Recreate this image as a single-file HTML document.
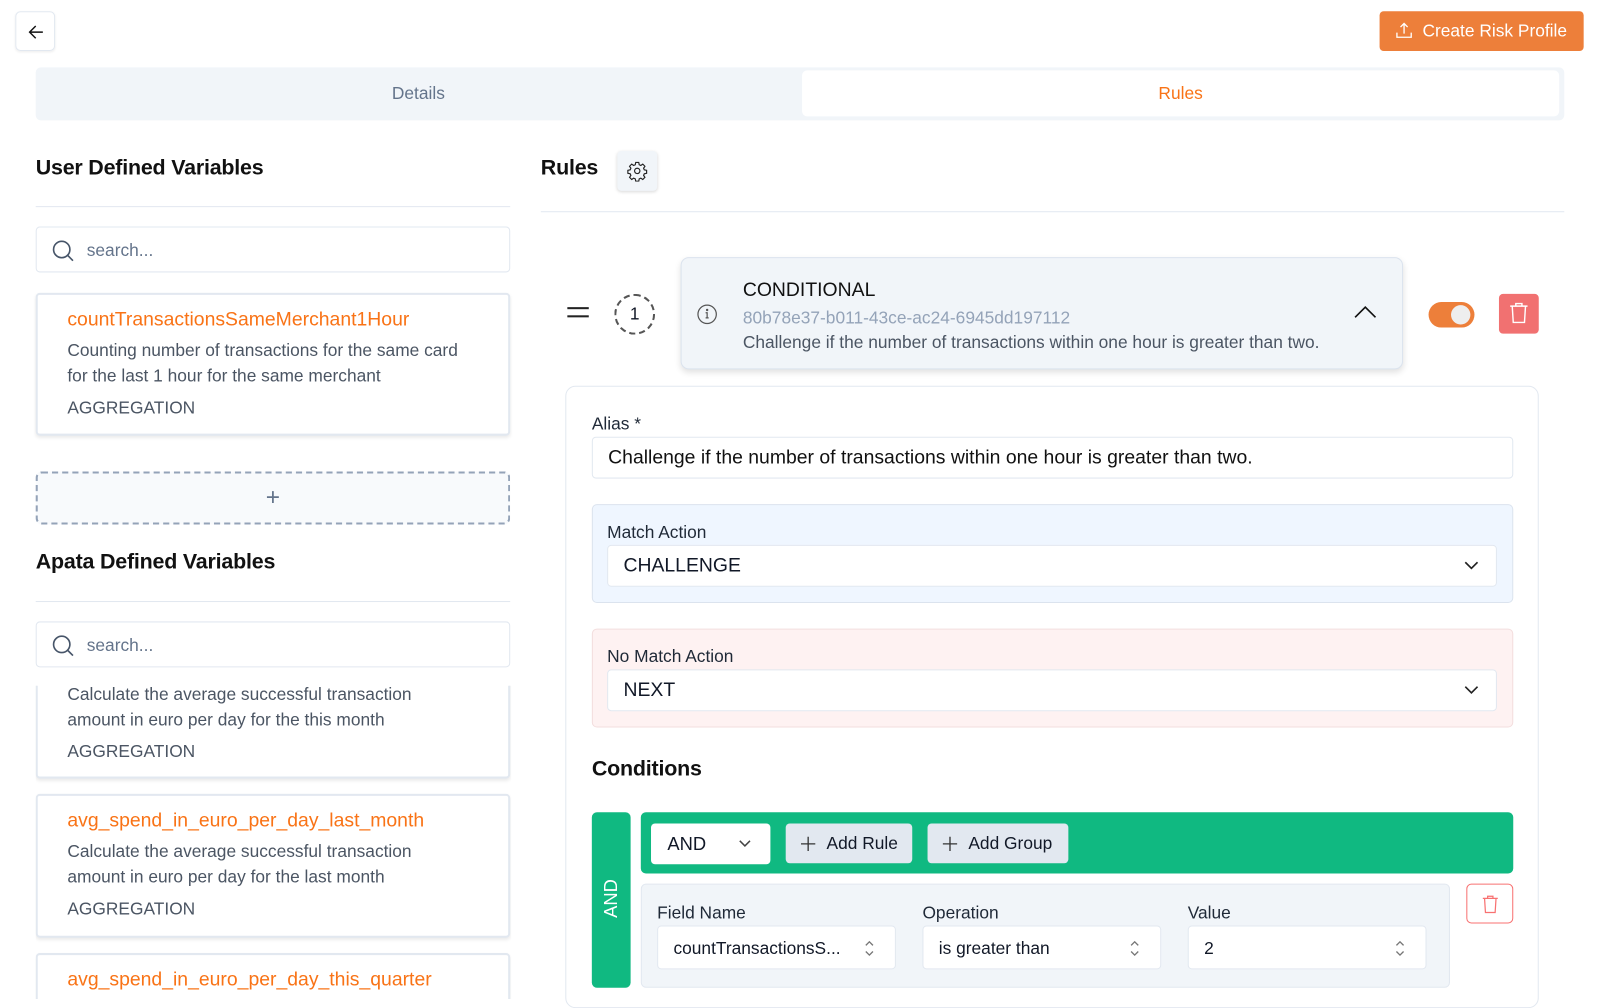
<!DOCTYPE html>
<html><head><meta charset="utf-8"><style>
*{box-sizing:border-box;margin:0;padding:0}
html,body{width:1600px;height:999px;overflow:hidden;background:#fff}
#w{position:absolute;left:0;top:0;width:1568px;height:979px;transform:scale(1.0204);transform-origin:0 0;font-family:"Liberation Sans",sans-serif;color:#111827}
.a{position:absolute}
.card{position:absolute;border:2px solid #e2e8f0;border-radius:4px;background:#fff;box-shadow:0 2px 3px rgba(0,0,0,.08)}
.t{color:#f97316;font-size:19px}
.d{color:#4b5563;font-size:17px;line-height:25px}
.ag{color:#4b5563;font-size:17px}
.inp{position:absolute;border:1px solid #e2e8f0;border-radius:4px;background:#fff}
.lbl{font-size:17px;color:#1f2937}
.h{font-size:21px;color:#111;font-weight:bold;letter-spacing:-.2px}
.st{position:absolute;right:20px;top:13px}
</style></head><body><div id="w">
<div class="a" style="left:15px;top:11px;width:39px;height:39px;border:1px solid #e2e8f0;border-radius:5px;box-shadow:0 1px 2px rgba(0,0,0,.06)">
<svg width="39" height="39" viewBox="0 0 39 39"><path d="M26 19.5H13M19 13.5l-6 6 6 6" stroke="#111" stroke-width="1.4" fill="none"/></svg></div>
<div class="a" style="left:1352px;top:11px;width:200px;height:39px;background:#ed7f3a;border-radius:4px;color:#fff;font-size:17px;line-height:39px;padding-left:42px">Create Risk Profile
<svg class="a" style="left:15px;top:10px" width="18" height="18" viewBox="0 0 18 18"><path d="M9 12V2M5.5 5.5L9 2l3.5 3.5M2 11v4.5h14V11" stroke="#fff" stroke-width="1.3" fill="none"/></svg></div>
<div class="a" style="left:35px;top:66px;width:1498px;height:52px;background:#f1f5f9;border-radius:5px"></div>
<div class="a" style="left:35px;top:66px;width:750px;height:52px;line-height:52px;text-align:center;color:#64748b;font-size:17px">Details</div>
<div class="a" style="left:786px;top:69px;width:742px;height:45px;background:#fff;border-radius:5px;line-height:45px;text-align:center;color:#f97316;font-size:17px">Rules</div>

<div class="a h" style="left:35px;top:153px">User Defined Variables</div>
<div class="a" style="left:35px;top:202px;width:465px;height:1px;background:#e2e8f0"></div>
<div class="inp" style="left:35px;top:222px;width:465px;height:45px"><svg class="a" style="left:14px;top:11px" width="24" height="24" viewBox="0 0 24 24"><circle cx="10.5" cy="10.5" r="8" stroke="#475569" stroke-width="1.6" fill="none"/><path d="M16.5 16.5l5 5" stroke="#475569" stroke-width="1.6"/></svg><span class="a" style="left:49px;top:13px;font-size:17px;color:#64748b">search...</span></div>
<div class="card" style="left:35px;top:287px;width:465px;height:140px"><div class="a t" style="left:29px;top:14px">countTransactionsSameMerchant1Hour</div><div class="a d" style="left:29px;top:42px">Counting number of transactions for the same card<br>for the last 1 hour for the same merchant</div><div class="a ag" style="left:29px;top:101px">AGGREGATION</div></div>
<div class="a" style="left:35px;top:462px;width:465px;height:52px;border:2px dashed #94a3b8;border-radius:6px;background:#f8fafc;text-align:center;line-height:48px;font-size:24px;color:#64748b;font-weight:300">+</div>
<div class="a h" style="left:35px;top:539px">Apata Defined Variables</div>
<div class="a" style="left:35px;top:589px;width:465px;height:1px;background:#e2e8f0"></div>
<div class="a" style="left:35px;top:672px;width:466px;height:307px;overflow:hidden">
<div class="card" style="left:0;top:-40px;width:465px;height:131px"><div class="a d" style="left:29px;top:34px">Calculate the average successful transaction<br>amount in euro per day for the this month</div><div class="a ag" style="left:29px;top:93px">AGGREGATION</div></div>
<div class="card" style="left:0;top:106px;width:465px;height:141px"><div class="a t" style="left:29px;top:14px">avg_spend_in_euro_per_day_last_month</div><div class="a d" style="left:29px;top:42px">Calculate the average successful transaction<br>amount in euro per day for the last month</div><div class="a ag" style="left:29px;top:101px">AGGREGATION</div></div>
<div class="card" style="left:0;top:262px;width:465px;height:100px"><div class="a t" style="left:29px;top:14px">avg_spend_in_euro_per_day_this_quarter</div></div>
</div>
<div class="inp" style="left:35px;top:609px;width:465px;height:45px"><svg class="a" style="left:14px;top:11px" width="24" height="24" viewBox="0 0 24 24"><circle cx="10.5" cy="10.5" r="8" stroke="#475569" stroke-width="1.6" fill="none"/><path d="M16.5 16.5l5 5" stroke="#475569" stroke-width="1.6"/></svg><span class="a" style="left:49px;top:13px;font-size:17px;color:#64748b">search...</span></div>

<div class="a h" style="left:530px;top:153px">Rules</div>
<div class="a" style="left:605px;top:148px;width:39px;height:39px;border-radius:4px;background:#f1f5f9;box-shadow:0 1px 3px rgba(0,0,0,.15)"><svg class="a" style="left:9px;top:9px" width="21" height="21" viewBox="0 0 24 24" fill="none" stroke="#222" stroke-width="1.3"><path d="M10.3 2.5h3.4l.5 2.6 1.8.8 2.2-1.5 2.4 2.4-1.5 2.2.8 1.8 2.6.5v3.4l-2.6.5-.8 1.8 1.5 2.2-2.4 2.4-2.2-1.5-1.8.8-.5 2.6h-3.4l-.5-2.6-1.8-.8-2.2 1.5-2.4-2.4 1.5-2.2-.8-1.8-2.6-.5v-3.4l2.6-.5.8-1.8-1.5-2.2 2.4-2.4 2.2 1.5 1.8-.8z"/><circle cx="12" cy="12" r="3"/></svg></div>
<div class="a" style="left:530px;top:207px;width:1003px;height:1px;background:#e2e8f0"></div>

<div class="a" style="left:556px;top:301px;width:21px;height:2px;background:#222"></div><div class="a" style="left:556px;top:309px;width:21px;height:2px;background:#222"></div>
<div class="a" style="left:602px;top:288px;width:40px;height:40px;border:2px dashed #555;border-radius:50%;text-align:center;line-height:36px;font-size:17px">1</div>
<div class="a" style="left:667px;top:252px;width:708px;height:110px;background:#f1f5f9;border:1px solid #dbe3ee;border-radius:8px;box-shadow:0 3px 6px rgba(0,0,0,.12)">
<svg class="a" style="left:14px;top:44px" width="22" height="22" viewBox="0 0 22 22" fill="none" stroke="#555" stroke-width="1.2"><circle cx="11" cy="11" r="9"/><path d="M9.5 9.5h1.5v5M9.5 14.5h3"/><circle cx="11" cy="6.8" r=".6" fill="#555"/></svg>
<div class="a" style="left:60px;top:21px;font-size:19px;color:#111">CONDITIONAL</div>
<div class="a" style="left:60px;top:49px;font-size:17px;color:#94a3b8">80b78e37-b011-43ce-ac24-6945dd197112</div>
<div class="a" style="left:60px;top:73px;font-size:17px;color:#4b5563">Challenge if the number of transactions within one hour is greater than two.</div>
<svg class="a" style="left:658px;top:45px" width="24" height="16" viewBox="0 0 24 16"><path d="M2 13L12 3l10 10" stroke="#111" stroke-width="1.6" fill="none"/></svg></div>
<div class="a" style="left:1400px;top:296px;width:45px;height:25px;border-radius:13px;background:#ed7f3a"><div class="a" style="left:22px;top:3px;width:19px;height:19px;border-radius:50%;background:#eee"></div></div>
<div class="a" style="left:1469px;top:288px;width:39px;height:39px;border-radius:4px;background:#f17171"><svg class="a" style="left:10px;top:8px" width="19" height="22" viewBox="0 0 19 22" fill="none" stroke="#fff" stroke-width="1.4"><path d="M1 4h17M6.5 4V1.5h6V4M3 4l1 16h11l1-16"/></svg></div>

<div class="a" style="left:554px;top:378px;width:954px;height:610px;border:1px solid #e2e8f0;border-radius:10px;background:#fff"></div>
<div class="a lbl" style="left:580px;top:406px">Alias *</div>
<div class="inp" style="left:580px;top:428px;width:903px;height:41px;padding-left:15px;line-height:40px;font-size:19px;color:#111">Challenge if the number of transactions within one hour is greater than two.</div>
<div class="a" style="left:580px;top:494px;width:903px;height:97px;background:#eff6ff;border:1px solid #dbe3ee;border-radius:5px"></div>
<div class="a lbl" style="left:595px;top:512px">Match Action</div>
<div class="inp" style="left:595px;top:534px;width:872px;height:41px;padding-left:15px;line-height:40px;font-size:19px">CHALLENGE<svg class="a" style="right:16px;top:14px" width="16" height="10" viewBox="0 0 16 10"><path d="M2 2l6 6 6-6" stroke="#222" stroke-width="1.6" fill="none"/></svg></div>
<div class="a" style="left:580px;top:616px;width:903px;height:97px;background:#fef2f2;border:1px solid #f3dede;border-radius:5px"></div>
<div class="a lbl" style="left:595px;top:634px">No Match Action</div>
<div class="inp" style="left:595px;top:656px;width:872px;height:41px;padding-left:15px;line-height:40px;font-size:19px">NEXT<svg class="a" style="right:16px;top:14px" width="16" height="10" viewBox="0 0 16 10"><path d="M2 2l6 6 6-6" stroke="#222" stroke-width="1.6" fill="none"/></svg></div>
<div class="a h" style="left:580px;top:742px">Conditions</div>

<div class="a" style="left:580px;top:796px;width:38px;height:172px;background:#10b981;border-radius:5px"><div class="a" style="left:-12px;top:74px;width:62px;text-align:center;color:#fff;font-size:18px;transform:rotate(-90deg)">AND</div></div>
<div class="a" style="left:628px;top:796px;width:855px;height:60px;background:#10b981;border-radius:5px"></div>
<div class="a" style="left:638px;top:807px;width:117px;height:40px;background:#fff;border-radius:4px;padding-left:16px;line-height:40px;font-size:18px">AND<svg class="a" style="left:85px;top:15px" width="14" height="9" viewBox="0 0 14 9"><path d="M2 2l5 5 5-5" stroke="#444" stroke-width="1.5" fill="none"/></svg></div>
<div class="a" style="left:770px;top:807px;width:124px;height:39px;background:#e2e8f0;border-radius:4px;line-height:39px;font-size:17px;padding-left:40px">Add Rule<svg class="a" style="left:14px;top:12px" width="16" height="16" viewBox="0 0 16 16"><path d="M8 1v14M1 8h14" stroke="#333" stroke-width="1.3"/></svg></div>
<div class="a" style="left:909px;top:807px;width:138px;height:39px;background:#e2e8f0;border-radius:4px;line-height:39px;font-size:17px;padding-left:40px">Add Group<svg class="a" style="left:14px;top:12px" width="16" height="16" viewBox="0 0 16 16"><path d="M8 1v14M1 8h14" stroke="#333" stroke-width="1.3"/></svg></div>
<div class="a" style="left:628px;top:866px;width:793px;height:102px;background:#f1f5f9;border:1px solid #e2e8f0;border-radius:5px"></div>
<div class="a lbl" style="left:644px;top:885px">Field Name</div>
<div class="a lbl" style="left:904px;top:885px">Operation</div>
<div class="a lbl" style="left:1164px;top:885px">Value</div>
<div class="inp" style="left:644px;top:907px;width:234px;height:43px;padding-left:15px;line-height:43px;font-size:17px">countTransactionsS...<svg class="st" width="10" height="17" viewBox="0 0 10 17"><path d="M1.5 5.5L5 2l3.5 3.5M1.5 11.5L5 15l3.5-3.5" stroke="#777" stroke-width="1.3" fill="none"/></svg></div>
<div class="inp" style="left:904px;top:907px;width:234px;height:43px;padding-left:15px;line-height:43px;font-size:17px">is greater than<svg class="st" width="10" height="17" viewBox="0 0 10 17"><path d="M1.5 5.5L5 2l3.5 3.5M1.5 11.5L5 15l3.5-3.5" stroke="#777" stroke-width="1.3" fill="none"/></svg></div>
<div class="inp" style="left:1164px;top:907px;width:234px;height:43px;padding-left:15px;line-height:43px;font-size:17px">2<svg class="st" width="10" height="17" viewBox="0 0 10 17"><path d="M1.5 5.5L5 2l3.5 3.5M1.5 11.5L5 15l3.5-3.5" stroke="#777" stroke-width="1.3" fill="none"/></svg></div>
<div class="a" style="left:1437px;top:866px;width:46px;height:39px;border:1px solid #f87171;border-radius:5px"><svg class="a" style="left:14px;top:10px" width="17" height="19" viewBox="0 0 19 22" fill="none" stroke="#f87171" stroke-width="1.4"><path d="M1 4h17M6.5 4V1.5h6V4M3 4l1 16h11l1-16"/></svg></div>
</div></body></html>
